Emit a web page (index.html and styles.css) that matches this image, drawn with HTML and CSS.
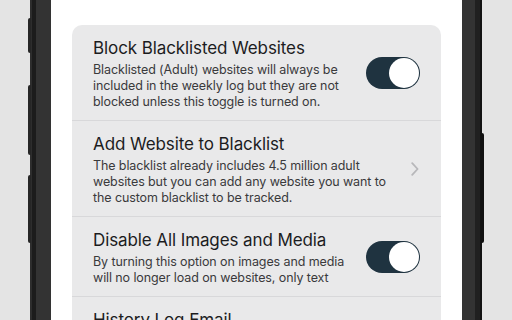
FILE: index.html
```html
<!DOCTYPE html>
<html lang="en">
<head>
<meta charset="utf-8">
<title>Settings</title>
<link rel="stylesheet" href="styles.css">
</head>
<body>
<div class="phone">
  <span class="side-btn side-btn--l1"></span>
  <span class="side-btn side-btn--l2"></span>
  <span class="side-btn side-btn--l3"></span>
  <span class="side-btn side-btn--r1"></span>
  <div class="screen">
    <div class="card">
      <div class="row row--toggle">
        <div class="row-text">
          <div class="row-title">Block Blacklisted Websites</div>
          <div class="row-sub">Blacklisted (Adult) websites will always be included in the weekly log but they are not blocked unless this toggle is turned on.</div>
        </div>
        <div class="toggle"><span class="knob"></span></div>
      </div>
      <div class="row row--link">
        <div class="row-text">
          <div class="row-title">Add Website to Blacklist</div>
          <div class="row-sub">The blacklist already includes 4.5 million adult websites but you can add any website you want to the custom blacklist to be tracked.</div>
        </div>
        <svg class="chevron" width="8" height="14" viewBox="0 0 8 14"><polyline points="1.2,1.2 6.6,7 1.2,12.8" fill="none" stroke="#b7b7ba" stroke-width="1.8" stroke-linecap="round" stroke-linejoin="round"/></svg>
      </div>
      <div class="row row--toggle">
        <div class="row-text">
          <div class="row-title">Disable All Images and Media</div>
          <div class="row-sub">By turning this option on images and media will no longer load on websites, only text</div>
        </div>
        <div class="toggle"><span class="knob"></span></div>
      </div>
      <div class="row">
        <div class="row-text">
          <div class="row-title">History Log Email</div>
        </div>
      </div>
    </div>
  </div>
</div>
</body>
</html>
```

FILE: styles.css
```css
html, body {
  margin: 0;
  padding: 0;
}
body {
  width: 512px;
  height: 320px;
  overflow: hidden;
  background: #e4e4e4;
  font-family: Inter, "Noto Sans", "Liberation Sans", sans-serif;
  color: #1c1c1e;
}
.phone {
  position: relative;
  margin-left: 30px;
  width: 452px;
  height: 320px;
  box-sizing: border-box;
  padding: 0 20px 0 21px;
  display: flex;
  background: linear-gradient(to right,
    #2d2d2d 0 2px,
    #1c1c1c 2px 6px,
    #333333 6px calc(100% - 7px),
    #202020 calc(100% - 7px) calc(100% - 2px),
    #121212 calc(100% - 2px) 100%);
}
.side-btn {
  position: absolute;
  width: 3px;
  background: #262626;
}
.side-btn--l1 { left: -2px; top: 18px; height: 35px; border-radius: 2px 0 0 2px; }
.side-btn--l2 { left: -2px; top: 85px; height: 70px; border-radius: 2px 0 0 2px; }
.side-btn--l3 { left: -2px; top: 175px; height: 68px; border-radius: 2px 0 0 2px; }
.side-btn--r1 { right: -2px; top: 133px; height: 110px; background: #111; border-radius: 0 2px 2px 0; }
.screen {
  flex: 1;
  background: #ffffff;
  padding: 25px 21px 0;
  overflow: hidden;
}
.card {
  background: #e9e9ea;
  border-radius: 10px 10px 0 0;
}
.row {
  display: flex;
  align-items: center;
  gap: 16px;
  padding: 12px 21px 10.5px 21px;
  border-bottom: 1px solid #d8d8da;
}
.row:last-child {
  border-bottom: none;
}
.row--link {
  gap: 17px;
  padding-right: 22px;
}
.row-text {
  flex: 1;
  min-width: 0;
}
.row-title {
  font-size: 17px;
  line-height: 22px;
  letter-spacing: -0.1px;
  color: #1c1c1e;
  margin-bottom: 2.5px;
}
.row-sub {
  font-size: 12.5px;
  line-height: 16px;
  letter-spacing: -0.1px;
  color: #3a3a3c;
}
.toggle {
  position: relative;
  flex: none;
  width: 54px;
  height: 32px;
  border-radius: 16px;
  background: #1f3340;
}
.knob {
  position: absolute;
  top: 1px;
  right: 1px;
  width: 30px;
  height: 30px;
  border-radius: 50%;
  background: #ffffff;
}
.chevron {
  flex: none;
  display: block;
}
```
